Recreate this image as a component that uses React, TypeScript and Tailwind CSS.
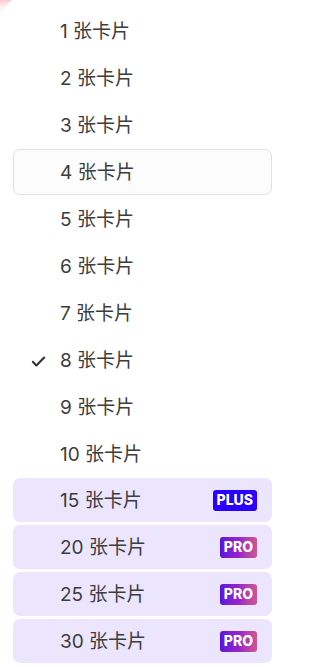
import React from "react";

type Option = {
  count: number;
  tier?: "plus" | "pro";
};

const options: Option[] = [
  { count: 1 },
  { count: 2 },
  { count: 3 },
  { count: 4 },
  { count: 5 },
  { count: 6 },
  { count: 7 },
  { count: 8 },
  { count: 9 },
  { count: 10 },
  { count: 15, tier: "plus" },
  { count: 20, tier: "pro" },
  { count: 25, tier: "pro" },
  { count: 30, tier: "pro" },
];

const selected = 8;
const hovered = 4;

function Check() {
  return (
    <svg width="17" height="17" viewBox="0 0 24 24" fill="none" stroke="#333" strokeWidth="3" strokeLinecap="round" strokeLinejoin="round">
      <path d="M4 12.5l5 5L20 6.5" />
    </svg>
  );
}

function Badge({ tier }: { tier: "plus" | "pro" }) {
  if (tier === "plus") {
    return (
      <span className="flex h-[21px] items-center rounded-[3px] bg-[#2a00ff] px-[4px] text-[14px] font-extrabold leading-none text-white">
        PLUS
      </span>
    );
  }
  return (
    <span className="flex h-[21px] items-center rounded-[3px] bg-gradient-to-r from-[#5a0fe0] via-[#9a1fc8] to-[#d1538f] px-[4px] text-[14px] font-extrabold leading-none text-white">
      PRO
    </span>
  );
}

export default function App() {
  return (
    <div className="relative h-[667px] w-[276px] overflow-hidden bg-white font-['Inter','Noto_Sans_CJK_SC',sans-serif]">
      {/* bit of the pink card peeking in at the corner */}
      <svg className="absolute left-0 top-0" width="14" height="16" viewBox="0 0 14 16">
        <defs>
          <linearGradient id="pk" x1="0" y1="0" x2="0" y2="1">
            <stop offset="0" stopColor="#fbc9cc" />
            <stop offset="1" stopColor="#fff" stopOpacity="0" />
          </linearGradient>
        </defs>
        <path d="M0 0H13C8 2 4 6 3 16H0Z" fill="url(#pk)" />
      </svg>

      <ul className="flex flex-col pl-[13px] pr-[4px] pt-[8px]">
        {options.map((o) => {
          const premium = !!o.tier;
          const rowCls = premium
            ? "h-[44px] mb-[3px] bg-[#ebe6fd] border border-transparent"
            : o.count === hovered
            ? "h-[46px] mb-[1px] bg-[#fcfcfc] border border-[#e6dfdf]"
            : "h-[46px] mb-[1px] border border-transparent";
          return (
            <li
              key={o.count}
              className={`flex items-center rounded-[7px] pr-[14px] pt-[3px] ${rowCls}`}
            >
              <span className="flex w-[46px] justify-end pr-[13px]">
                {o.count === selected && <Check />}
              </span>
              <span className="flex-1 text-[19px] text-[#3d3d3d]">
                {o.count} 张卡片
              </span>
              {o.tier && (
                <span className="-mt-[3px]">
                  <Badge tier={o.tier} />
                </span>
              )}
            </li>
          );
        })}
      </ul>
    </div>
  );
}
